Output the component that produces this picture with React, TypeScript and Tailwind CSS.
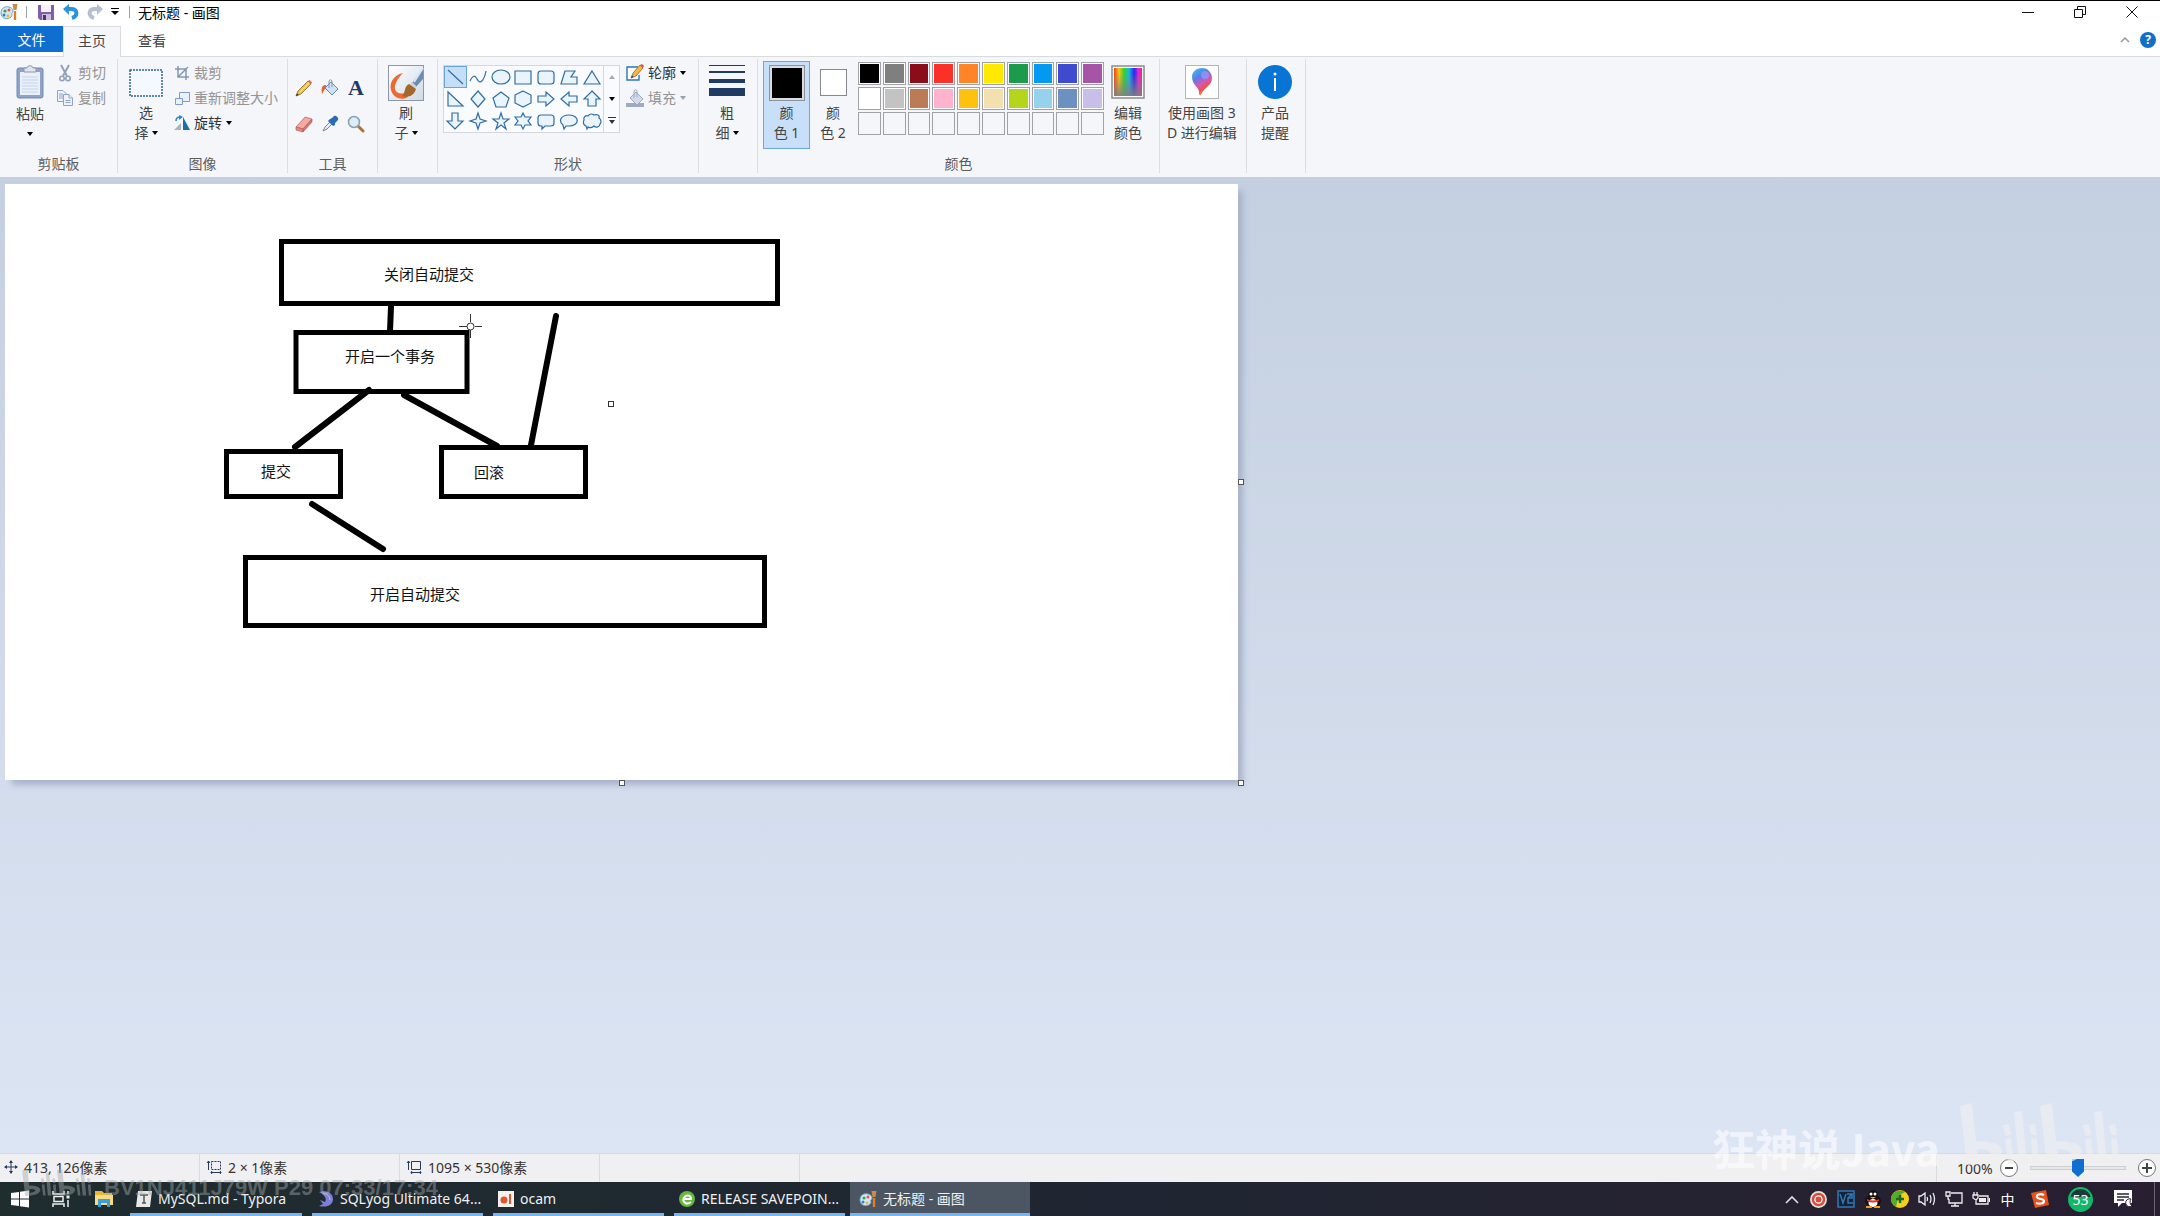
import type { ReactNode } from "react";

interface GroupProps {
  label?: string;
  className: string;
  children: ReactNode;
}

interface TaskItem {
  title: string;
  icon: ReactNode;
  className: string;
}

const shapes = [
  "M3 3 L18 17",
  "M2 14 C5 8 7 8 9 12 C12 18 16 14 18 4",
  "M1 10 a9 7 0 1 0 18 0 a9 7 0 1 0 -18 0",
  "M2 4 H18 V17 H2 Z",
  "M5 4 H15 Q18 4 18 7 V14 Q18 17 15 17 H5 Q2 17 2 14 V7 Q2 4 5 4 Z",
  "M6 4 H16 L12 10 H18 V17 H2 Z",
  "M10 4 L18 17 H2 Z",
  "M3 3 V17 H18 Z",
  "M10 2 L17 10 L10 18 L3 10 Z",
  "M10 3 L18 9 L15 18 H5 L2 9 Z",
  "M10 2 L18 6 V14 L10 18 L2 14 V6 Z",
  "M2 7 H10 V3 L18 10 L10 17 V13 H2 Z",
  "M18 7 H10 V3 L2 10 L10 17 V13 H18 Z",
  "M10 2 L18 10 H14 V17 H6 V10 H2 Z",
  "M7 2 H13 V10 H18 L10 18 L2 10 H7 Z",
  "M10 2 L12 8 L18 10 L12 12 L10 18 L8 12 L2 10 L8 8 Z",
  "M10 2 L12 8 H18 L13 12 L15 18 L10 14 L5 18 L7 12 L2 8 H8 Z",
  "M10 2 L12 6 H18 L15 10 L18 14 H12 L10 18 L8 14 H2 L5 10 L2 6 H8 Z",
  "M5 4 H15 Q18 4 18 7 V12 Q18 15 15 15 H9 L6 18 V15 H5 Q2 15 2 12 V7 Q2 4 5 4 Z",
  "M7 15 L5 18 L4 14 C-1 10 2 4 10 4 C21 4 21 15 10 15 Z",
  "M6 16 L5 18 L4 15 C1 14 1 11 2 9 C1 6 4 4 6 5 C8 2 11 3 12 4 C15 3 18 4 17 7 C20 9 19 12 18 13 C18 16 14 17 12 15 C10 17 7 17 6 16 Z",
];

const palette = [
  "bg-[#000000]", "bg-[#7f7f7f]", "bg-[#8b0d1a]", "bg-[#fb3029]", "bg-[#ff8427]",
  "bg-[#ffe900]", "bg-[#1c9c4b]", "bg-[#0398f1]", "bg-[#3f4bcf]", "bg-[#a654a6]",
  "bg-[#ffffff]", "bg-[#c3c3c3]", "bg-[#bb7b56]", "bg-[#ffb2cb]", "bg-[#ffc110]",
  "bg-[#f2e1ae]", "bg-[#b3d51c]", "bg-[#96d2ec]", "bg-[#6c90bf]", "bg-[#c8bfe9]",
  "", "", "", "", "", "", "", "", "", "",
];

const Caret = ({ muted = false }: { muted?: boolean }) => (
  <svg className={muted ? "h-1 w-[6px] text-gray-400" : "h-1 w-[6px] text-black"} viewBox="0 0 6 4" fill="currentColor">
    <path d="M0 0H6L3 4Z" />
  </svg>
);

const Group = ({ label, className, children }: GroupProps) => (
  <section className={`mt-[2px] mb-1 flex h-[114px] shrink-0 flex-col border-r border-[#dcdee3] ${className}`}>
    <div className="flex flex-1 items-start pt-[6px]">{children}</div>
    {label && <div className="h-5 text-center leading-[22px] text-[#5c5c5c]">{label}</div>}
  </section>
);

const PaintIcon = () => (
  <svg className="h-[18px] w-[18px] shrink-0" viewBox="0 0 18 18">
    <path d="M1 10 C1 5 5 3 9 4 C13 5 14 8 12 10 C11 11 13 12 11 14 C8 17 1 16 1 10Z" fill="#d3e8f4" stroke="#6fa3c0" />
    <circle cx="5" cy="8" r="1.6" fill="#43a047" />
    <circle cx="9" cy="7" r="1.5" fill="#e2574c" />
    <circle cx="4" cy="12" r="1.5" fill="#2f80d0" />
    <circle cx="8" cy="13" r="1.4" fill="#f0b429" />
    <path d="M15 8V17" stroke="#d9822b" strokeWidth="2.4" />
    <path d="M12.5 1 L17.5 1 L16.5 7 H13.5Z" fill="#c98b4b" />
  </svg>
);

const SaveIcon = () => (
  <svg className="h-4 w-4" viewBox="0 0 16 16">
    <path d="M0 1H16V16H2L0 14Z" fill="#7e5fa8" />
    <path d="M3 1H13V8H3Z" fill="#f4f1fa" />
    <path d="M4 10H13V16H4Z" fill="#c9bfdc" />
    <path d="M5 11H8V16H5Z" fill="#4b3474" />
  </svg>
);

const UndoIcon = () => (
  <svg className="h-4 w-4" viewBox="0 0 16 16">
    <path d="M4 5 H8 C15 5 15 12 9 14" fill="none" stroke="#2b93dc" strokeWidth="4" />
    <path d="M0 5 L6 0 V11Z" fill="#2b93dc" />
  </svg>
);

const RedoIcon = () => (
  <svg className="h-4 w-4" viewBox="0 0 16 16">
    <path d="M12 5 H8 C1 5 1 12 7 14" fill="none" stroke="#b4bfd3" strokeWidth="4" />
    <path d="M16 5 L10 0 V11Z" fill="#b4bfd3" />
  </svg>
);

const PasteIcon = () => (
  <svg className="h-[34px] w-7" viewBox="0 0 28 34">
    <rect x="1" y="3" width="26" height="30" rx="2" fill="#8ea3c8" stroke="#7489b1" />
    <path d="M4 7H24V30H4Z" fill="#e9f0fa" />
    <path d="M6 12H22M6 15H22M6 18H22M6 21H22M6 24H22M6 27H22" stroke="#c5d3e8" />
    <path d="M8 3H11C11 0 17 0 17 3H20V7H8Z" fill="#dfe5ef" stroke="#8b98ad" />
  </svg>
);

const CutIcon = () => (
  <svg className="h-[18px] w-[18px]" viewBox="0 0 18 18" fill="none" stroke="#92a0b8" strokeWidth="1.6">
    <path d="M5 1L11 12M13 1L7 12" strokeWidth="2" />
    <circle cx="6" cy="14.5" r="2.2" />
    <circle cx="12" cy="14.5" r="2.2" />
  </svg>
);

const CopyIcon = () => (
  <svg className="h-[18px] w-[18px]" viewBox="0 0 18 18" fill="#eef3fb" stroke="#8fa5c8">
    <path d="M1.5 1.5H7L10.5 5V12.5H1.5Z" />
    <path d="M3 5H7M3 7H7M3 9H7" />
    <path d="M7.5 5.5H13L16.5 9V16.5H7.5Z" />
    <path d="M13 5.5V9H16.5M9.5 11.5H14.5M9.5 13.5H14.5" />
  </svg>
);

const CropIcon = () => (
  <svg className="h-4 w-4" viewBox="0 0 16 16" fill="none" stroke="#8496b5" strokeWidth="1.5">
    <path d="M4 1V12H15M1 4H12V15M4 12L14 2" />
  </svg>
);

const ResizeIcon = () => (
  <svg className="h-4 w-4" viewBox="0 0 16 16" fill="#eaf1fa" stroke="#7f9cc4">
    <path d="M5.5 2.5H15.5V11.5H5.5Z" />
    <path d="M1.5 8.5H8.5V14.5H1.5Z" />
  </svg>
);

const RotateIcon = () => (
  <svg className="h-4 w-4" viewBox="0 0 16 16">
    <path d="M9 2V15H16Z" fill="#1c6ea8" />
    <path d="M7 8V15H0Z" fill="#a9b3c0" />
    <path d="M2 6C2 3 4 2 6 2" stroke="#2f86cf" strokeWidth="1.6" fill="none" />
    <path d="M5 0L9 2L5 5Z" fill="#2f86cf" />
  </svg>
);

const PencilIcon = () => (
  <svg className="h-[18px] w-[18px]" viewBox="0 0 18 18">
    <path d="M1 17L3 12L13 2L16 5L6 15Z" fill="#f0c052" stroke="#8a6a2c" strokeWidth=".8" />
    <path d="M13 2L14.5 .8L17.2 3.6L16 5Z" fill="#d9706a" />
    <path d="M1 17L2 14.3L3.8 16Z" fill="#333" />
    <path d="M5 13L14 4" stroke="#fbe49c" />
  </svg>
);

const BucketIcon = ({ muted = false }: { muted?: boolean }) => (
  <svg className="h-[18px] w-[18px]" viewBox="0 0 18 18">
    {muted ? <path d="M0 14H18V18H0Z" fill="#9caac2" /> : <path d="M5 6C1 6 0 9 1 15C3 12 3 10 6 9Z" fill="#e2603a" />}
    <path d="M10 3L17 10L11 16L4 9Z" fill={muted ? "#d4dbe8" : "#cfe2f4"} stroke={muted ? "#9aa9c2" : "#5f8db8"} />
    <path d="M8 9V3C8 0 11 0 11 3V8" fill="none" stroke={muted ? "#9aa9c2" : "#8a9097"} />
  </svg>
);

const EraserIcon = () => (
  <svg className="h-[18px] w-[18px]" viewBox="0 0 18 18" strokeWidth=".7" stroke="#b55f5a">
    <path d="M1 12L10 2L17 4L8 14Z" fill="#f4a9a3" />
    <path d="M1 12L8 14V17L1 15Z" fill="#e88780" />
    <path d="M8 14L17 4V7L8 17Z" fill="#d9736d" />
  </svg>
);

const PickerIcon = () => (
  <svg className="h-[18px] w-[18px]" viewBox="0 0 18 18">
    <path d="M2 16L4 12L10 6L12 8L6 14Z" fill="#e5eef6" stroke="#71879d" />
    <path d="M9 4L11 3L13 1C15 0 18 3 17 5L14 8V10L12 11L7 6Z" fill="#2a6bb5" />
  </svg>
);

const MagnifierIcon = () => (
  <svg className="h-[18px] w-[18px]" viewBox="0 0 18 18">
    <path d="M11 11L16 16" stroke="#b07437" strokeWidth="3" strokeLinecap="round" />
    <circle cx="7" cy="7" r="5.5" fill="#dcedfa" stroke="#8b9db1" strokeWidth="1.5" />
  </svg>
);

const BrushIcon = () => (
  <svg className="h-9 w-9" viewBox="0 0 36 36">
    <defs>
      <linearGradient id="brush-bg" x2="1" y2="1">
        <stop stopColor="#ffffff" />
        <stop offset="1" stopColor="#cfd9e6" />
      </linearGradient>
    </defs>
    <rect x=".5" y=".5" width="35" height="35" fill="url(#brush-bg)" stroke="#8c97a8" />
    <path d="M15 8C5 10 1 19 3 25C5 33 14 36 20 32L17 28C10 30 6 26 7 21C8 16 11 12 15 8Z" fill="#ec6a31" />
    <path d="M35 3L24 18L28 22L35 14Z" fill="#6d8db1" />
    <path d="M35 3L26 17" stroke="#dbe5f0" strokeWidth="2" />
    <path d="M24 17L29 22L26 25L21 20Z" fill="#cfd5db" />
    <path d="M21 19C16 21 18 27 14 31C20 33 26 31 28 24Z" fill="#a4662d" />
  </svg>
);

const RainbowIcon = () => (
  <svg className="h-[34px] w-[34px]" viewBox="0 0 34 34">
    <defs>
      <linearGradient id="hue">
        <stop stopColor="#f0401c" />
        <stop offset=".18" stopColor="#f4c516" />
        <stop offset=".36" stopColor="#2fd42c" />
        <stop offset=".54" stopColor="#19b4e8" />
        <stop offset=".72" stopColor="#2828e8" />
        <stop offset=".88" stopColor="#e828d8" />
        <stop offset="1" stopColor="#f02860" />
      </linearGradient>
      <linearGradient id="fade" x2="0" y2="1">
        <stop offset=".2" stopColor="#808080" stopOpacity="0" />
        <stop offset="1" stopColor="#808080" stopOpacity=".9" />
      </linearGradient>
    </defs>
    <rect x="1" y="1" width="32" height="32" fill="#fff" stroke="#8b8b8b" strokeWidth="1.5" />
    <rect x="3" y="3" width="28" height="28" fill="url(#hue)" />
    <rect x="3" y="3" width="28" height="28" fill="url(#fade)" />
  </svg>
);

const Paint3DIcon = () => (
  <svg className="h-[34px] w-[34px]" viewBox="0 0 34 34">
    <defs>
      <linearGradient id="drop" x1=".1" x2=".6" y2="1">
        <stop stopColor="#35c3f3" />
        <stop offset=".35" stopColor="#5a7be8" />
        <stop offset=".6" stopColor="#d457b5" />
        <stop offset=".8" stopColor="#f0504e" />
        <stop offset="1" stopColor="#f8b133" />
      </linearGradient>
    </defs>
    <rect x=".5" y=".5" width="33" height="33" fill="#fff" stroke="#b5b5b5" />
    <path d="M17 3C23 3 27 8 27 13C27 21 19 22 16 30C15 31 14 30 14 28C15 23 7 20 7 12C7 7 11 3 17 3Z" fill="url(#drop)" />
    <circle cx="20" cy="10" r="4" fill="#8fa0f4" opacity=".7" />
  </svg>
);

const OutlineIcon = () => (
  <svg className="h-[18px] w-[18px]" viewBox="0 0 18 18">
    <path d="M12 3H1V16H13V11" fill="#fff" stroke="#2e75b5" strokeWidth="1.4" />
    <path d="M5 14L7 9L14 1L17 4L10 12Z" fill="#f0b84a" stroke="#94662b" strokeWidth=".8" />
    <path d="M14 1L17 4L18 2L16 0Z" fill="#d3574f" />
    <path d="M5 14L6 11.5L7.5 13Z" fill="#333" />
  </svg>
);

// Ribbon button with the two line caption under its picture
const TallButton = ({ icon, lines, caret = false, className }: { icon: ReactNode; lines: string[]; caret?: boolean; className: string }) => (
  <button className={`flex flex-col items-center ${className}`}>
    <span className="flex h-[38px] items-start justify-center">{icon}</span>
    <span className="leading-5">{lines[0]}</span>
    <span className="flex items-center gap-[3px] leading-5 whitespace-nowrap">
      {lines[1]}
      {caret && <Caret />}
    </span>
  </button>
);

const SmallButton = ({ icon, text, disabled = false, caret = false }: { icon: ReactNode; text: string; disabled?: boolean; caret?: boolean }) => (
  <button disabled={disabled} className="flex h-[25px] items-center gap-1 whitespace-nowrap text-[#333] disabled:text-[#949494]">
    {icon}
    {text}
    {caret && <Caret muted={disabled} />}
  </button>
);

const TitleBar = () => (
  <header className="flex h-[26px] items-start border-t border-black bg-white">
    <div className="flex h-[22px] items-center">
      <PaintIcon />
      <span className="mr-[11px] ml-2 h-3 w-px bg-gray-400" />
      <button aria-label="保存" className="mr-[9px]"><SaveIcon /></button>
      <button aria-label="撤消" className="mr-2"><UndoIcon /></button>
      <button aria-label="重做" className="mr-2"><RedoIcon /></button>
      <button aria-label="自定义快速访问工具栏">
        <svg className="h-2 w-2" viewBox="0 0 8 8"><path d="M0 0H8V1H0ZM0 3H8L4 7Z" /></svg>
      </button>
      <span className="mr-2 ml-[10px] h-3 w-px bg-gray-400" />
      <h1 className="text-black">无标题 - 画图</h1>
    </div>
    <div className="ml-auto flex h-[22px] pr-[2px]">
      <button aria-label="最小化" className="flex w-[52px] items-center justify-center">
        <svg className="h-3 w-3" viewBox="0 0 12 12" stroke="#111"><path d="M0 6.500H12" /></svg>
      </button>
      <button aria-label="还原" className="flex w-[52px] items-center justify-center">
        <svg className="h-3 w-3" viewBox="0 0 12 12" stroke="#111" fill="none"><path d="M.5 3.500H8.500V11.500H.5ZM3.500 3.500V.5H11.500V8.500H8.500" /></svg>
      </button>
      <button aria-label="关闭" className="flex w-[52px] items-center justify-center">
        <svg className="h-3 w-3" viewBox="0 0 12 12" stroke="#111"><path d="M.5.5L11.500 11.500M11.500.5L.5 11.500" /></svg>
      </button>
    </div>
  </header>
);

const TabRow = () => (
  <nav className="flex h-[31px] items-start border-b border-[#dadbdf] bg-white">
    <button className="h-[26px] w-[63px] bg-[#0f6fd0] text-white">文件</button>
    <button className="-mb-px h-[31px] w-[58px] border-x border-t border-[#dadbdf] bg-[#f5f6fa] pb-[3px] text-[#444]">主页</button>
    <button className="h-[28px] w-[62px] text-[#444]">查看</button>
    <div className="ml-auto flex h-[28px] items-center gap-[10px] pr-1">
      <button aria-label="最小化功能区">
        <svg className="h-[6px] w-[10px]" viewBox="0 0 10 6" fill="none" stroke="#999" strokeWidth="1.5"><path d="M1 5L5 1L9 5" /></svg>
      </button>
      <button aria-label="帮助" className="h-4 w-4 rounded-full bg-[#1070c8] text-xs leading-4 font-bold text-white">?</button>
    </div>
  </nav>
);

const Ribbon = () => (
  <div className="flex h-[120px] overflow-hidden bg-[#f5f6fa] text-[#444]">
    <Group label="剪贴板" className="w-[118px]">
      <button className="ml-4 flex flex-col items-center">
        <PasteIcon />
        <span className="mt-1 leading-[22px]">粘贴</span>
        <span className="mt-[7px]"><Caret /></span>
      </button>
      <div className="-mt-[5px] ml-3">
        <SmallButton disabled icon={<CutIcon />} text="剪切" />
        <SmallButton disabled icon={<CopyIcon />} text="复制" />
      </div>
    </Group>

    <Group label="图像" className="w-[170px]">
      <TallButton
        className="ml-[10px] w-[36px]"
        lines={["选", "择"]}
        caret
        icon={
          <svg className="mt-1 h-7 w-[34px]" viewBox="0 0 34 28" fill="#f4f9ff" stroke="#2c6397" strokeWidth="1.500" strokeDasharray="2 1">
            <path d="M1 1H33V27H1Z" />
          </svg>
        }
      />
      <div className="-mt-[5px] ml-[10px]">
        <SmallButton disabled icon={<CropIcon />} text="裁剪" />
        <SmallButton disabled icon={<ResizeIcon />} text="重新调整大小" />
        <SmallButton caret icon={<RotateIcon />} text="旋转" />
      </div>
    </Group>

    <Group label="工具" className="w-[90px]">
      <div className="ml-[7px] mt-[14px] grid grid-cols-3 gap-x-2 gap-y-[18px]">
        <button aria-label="铅笔"><PencilIcon /></button>
        <button aria-label="用颜色填充"><BucketIcon /></button>
        <button aria-label="文本" className="h-[18px] w-[18px] font-[Liberation_Serif,serif] text-[22px] leading-[18px] font-bold text-[#1f3a63]">A</button>
        <button aria-label="橡皮擦"><EraserIcon /></button>
        <button aria-label="颜色选取器"><PickerIcon /></button>
        <button aria-label="放大镜"><MagnifierIcon /></button>
      </div>
    </Group>

    <Group className="w-[60px]">
      <TallButton className="ml-[10px]" lines={["刷", "子"]} caret icon={<BrushIcon />} />
    </Group>

    <Group label="形状" className="w-[261px]">
      <div className="ml-[5px] flex h-[68px] border border-[#d4d7dd] bg-[#fafbfe]">
        <div className="grid w-[159px] grid-cols-7 content-start">
          {shapes.map((d, index) => (
            <button
              key={index}
              aria-label={`形状 ${index + 1}`}
              className={`flex h-[22px] items-center justify-center border ${index === 0 ? "border-[#6ba4dc] bg-[#c6dff8]" : "border-transparent"}`}
            >
              <svg className="h-5 w-5" viewBox="0 0 20 20" fill={index < 2 ? "none" : "#eaf4fd"} stroke="#2f6da3" strokeWidth="1.2">
                <path d={d} />
              </svg>
            </button>
          ))}
        </div>
        <div className="flex w-4 flex-col border-l border-[#d4d7dd]">
          <button aria-label="上一行" className="flex flex-1 items-center justify-center">
            <svg className="h-1 w-[6px]" viewBox="0 0 6 4" fill="#aaa"><path d="M0 4H6L3 0Z" /></svg>
          </button>
          <button aria-label="下一行" className="flex flex-1 items-center justify-center"><Caret /></button>
          <button aria-label="更多形状" className="flex flex-1 items-center justify-center">
            <svg className="h-2 w-2" viewBox="0 0 8 8" fill="#333"><path d="M0 0H8V1H0ZM1 3H7L4 7Z" /></svg>
          </button>
        </div>
      </div>
      <div className="-mt-[5px] ml-[6px]">
        <SmallButton caret icon={<OutlineIcon />} text="轮廓" />
        <SmallButton caret disabled icon={<BucketIcon muted />} text="填充" />
      </div>
    </Group>

    <Group className="w-[59px]">
      <TallButton
        className="ml-[10px]"
        lines={["粗", "细"]}
        caret
        icon={
          <svg className="h-8 w-9" viewBox="0 0 36 32" fill="#1f3a63">
            <path d="M0 0H36V1H0ZM0 6H36V8H0ZM0 14H36V18H0ZM0 23H36V31H0Z" />
          </svg>
        }
      />
    </Group>

    <Group label="颜色" className="w-[402px]">
      <button className="-mt-1 ml-[5px] flex h-[88px] w-[47px] flex-col items-center border border-[#6ea6df] bg-[#c7dff8] pt-[3px]">
        <span className="h-[36px] w-[36px] border border-[#8a929c] bg-[#d8dbe0] p-[2px]">
          <span className="block h-full bg-black" />
        </span>
        <span className="mt-[2px] leading-5">颜</span>
        <span className="leading-5">色 1</span>
      </button>
      <TallButton
        className="ml-2 w-[30px]"
        lines={["颜", "色 2"]}
        icon={<span className="mt-1 h-[27px] w-[27px] border border-[#85888f] bg-white" />}
      />
      <div className="-mt-[3px] ml-[10px] grid w-[246px] grid-cols-10 gap-[2px]">
        {palette.map((color, index) => (
          <button
            key={index}
            aria-label={`调色板 ${index + 1}`}
            className={`h-[23px] border border-[#a0a2a8] p-px ${color ? "bg-white" : "bg-[#f5f6fa]"}`}
          >
            <span className={`block h-full ${color}`} />
          </button>
        ))}
      </div>
      <TallButton className="ml-[7px]" lines={["编辑", "颜色"]} icon={<RainbowIcon />} />
    </Group>

    <Group className="w-[87px]">
      <TallButton className="ml-[7px] whitespace-nowrap" lines={["使用画图 3", "D 进行编辑"]} icon={<Paint3DIcon />} />
    </Group>

    <Group className="w-[59px]">
      <TallButton
        className="ml-[11px]"
        lines={["产品", "提醒"]}
        icon={
          <svg className="h-[34px] w-[34px]" viewBox="0 0 34 34">
            <circle cx="17" cy="17" r="17" fill="#0874d4" />
            <path d="M17 13V26" stroke="#fff" strokeWidth="2" />
            <circle cx="17" cy="9" r="1.500" fill="#fff" />
          </svg>
        }
      />
    </Group>
  </div>
);

const Drawing = () => (
  <svg className="block h-[596px] w-[1233px]" viewBox="5 184 1233 596">
    <g fill="none" stroke="#000" strokeWidth="5">
      <rect x="281.500" y="241.500" width="496" height="62" />
      <rect x="296" y="332.500" width="171" height="59" />
      <rect x="226.500" y="451.500" width="114" height="45" />
      <rect x="441.500" y="447.500" width="144" height="49" />
      <rect x="245.500" y="557.500" width="519" height="68" />
    </g>
    <g stroke="#000" strokeWidth="6" strokeLinecap="round">
      <path d="M391 307L390 331M369 390L295 447M404 395L497 446M556 316L531 445M312 504L383 549" />
    </g>
    <g className="font-['Noto_Sans_CJK_SC',sans-serif] text-[15px]" fill="#111">
      <text x="384" y="280">关闭自动提交</text>
      <text x="345" y="362">开启一个事务</text>
      <text x="261" y="477">提交</text>
      <text x="474" y="478">回滚</text>
      <text x="370" y="600">开启自动提交</text>
    </g>
    <g fill="#fff" stroke="#333">
      <path d="M459 326.500H467M475 326.500H482M470.500 314V322M470.500 330V338" />
      <circle cx="470.500" cy="326.500" r="3.500" />
      <rect x="608.500" y="401.500" width="5" height="5" />
    </g>
  </svg>
);

const Workspace = () => (
  <main className="flex-1 overflow-hidden bg-linear-to-b from-[#c4cfdf] to-[#dce5f4] pt-[7px] pl-[5px]">
    <div className="relative w-[1233px] bg-white shadow-[6px_6px_6px_-1px_#a9b3cb]">
      <Drawing />
      <span className="absolute top-1/2 -right-[6px] h-[6px] w-[6px] -translate-y-1/2 border border-[#555] bg-white" />
      <span className="absolute -right-[6px] -bottom-[6px] h-[6px] w-[6px] border border-[#555] bg-white" />
      <span className="absolute -bottom-[6px] left-1/2 h-[6px] w-[6px] -translate-x-1/2 border border-[#555] bg-white" />
    </div>
  </main>
);

const StatusBar = () => (
  <footer className="flex h-[29px] items-center border-t border-[#d9dade] bg-[#f0f0f2] text-[#333]">
    <div className="flex h-full w-[200px] items-center gap-[6px] border-r border-[#d9dade] pb-[2px] pl-1">
      <svg className="h-[14px] w-[14px]" viewBox="0 0 14 14" stroke="#243a5e" fill="#243a5e">
        <path d="M7 1V13M1 7H13" />
        <path d="M7 0L9 3H5ZM7 14L5 11H9ZM0 7L3 5V9ZM14 7L11 9V5Z" stroke="none" />
      </svg>
      <span>413, 126像素</span>
    </div>
    <div className="flex h-full w-[200px] items-center gap-[6px] border-r border-[#d9dade] pb-[2px] pl-[6px]">
      <svg className="h-4 w-4" viewBox="0 0 16 16" stroke="#243a5e" fill="none">
        <path d="M5.500 2.500H14.500V10.500H5.500Z" strokeDasharray="2 1" />
        <path d="M2.500 2V11M1 4L2.500 2L4 4M5 13.500H15M6 12L5 13.500L6 15M14 12L15 13.500L14 15" />
      </svg>
      <span>2 × 1像素</span>
    </div>
    <div className="flex h-full w-[200px] items-center gap-[6px] border-r border-[#d9dade] pb-[2px] pl-[6px]">
      <svg className="h-4 w-4" viewBox="0 0 16 16" stroke="#243a5e" fill="none">
        <path d="M5.500 2.500H14.500V10.500H5.500Z" />
        <path d="M2.500 2V11M1 4L2.500 2L4 4M5 13.500H15M6 12L5 13.500L6 15M14 12L15 13.500L14 15" />
      </svg>
      <span>1095 × 530像素</span>
    </div>
    <div className="h-full w-[200px] border-r border-[#d9dade]" />
    <div className="ml-auto flex h-full items-center border-l border-[#d9dade] pr-1 pl-5">
      <label htmlFor="zoom" className="w-[43px]">100%</label>
      <button aria-label="缩小" className="flex h-[18px] w-[18px] items-center justify-center rounded-full border border-[#777] bg-white">
        <svg className="h-2 w-2" viewBox="0 0 8 8" fill="#444"><path d="M0 3H8V5H0Z" /></svg>
      </button>
      <input
        id="zoom"
        type="range"
        defaultValue={50}
        className="mx-3 h-5 w-[96px] appearance-none bg-transparent [&::-webkit-slider-runnable-track]:h-[4px] [&::-webkit-slider-runnable-track]:border [&::-webkit-slider-runnable-track]:border-[#cfcfd2] [&::-webkit-slider-runnable-track]:bg-[#e7e7e9] [&::-webkit-slider-thumb]:-mt-2 [&::-webkit-slider-thumb]:h-[18px] [&::-webkit-slider-thumb]:w-3 [&::-webkit-slider-thumb]:appearance-none [&::-webkit-slider-thumb]:bg-[#0f6fd0] [&::-webkit-slider-thumb]:[clip-path:polygon(0_0,100%_0,100%_70%,50%_100%,0_70%)]"
      />
      <button aria-label="放大" className="flex h-[18px] w-[18px] items-center justify-center rounded-full border border-[#777] bg-white">
        <svg className="h-[10px] w-[10px]" viewBox="0 0 10 10" fill="#444"><path d="M4 0H6V4H10V6H6V10H4V6H0V4H4Z" /></svg>
      </button>
    </div>
  </footer>
);

const tasks: TaskItem[] = [
  {
    title: "MySQL.md - Typora",
    className: "mr-[10px] w-[172px] pl-[6px]",
    icon: (
      <svg className="h-4 w-4 shrink-0" viewBox="0 0 16 16">
        <path d="M2 0H16L14 16H0Z" fill="#e9e9e9" />
        <path d="M4 4H12M8 4V12M6 12H10" stroke="#555" strokeWidth="1.500" />
      </svg>
    ),
  },
  {
    title: "SQLyog Ultimate 64...",
    className: "mr-[10px] w-[171px] pl-[6px]",
    icon: (
      <svg className="h-4 w-4 shrink-0" viewBox="0 0 16 16">
        <path d="M1 1C7 -1 15 1 15 8C15 14 9 17 1 15L5 13L2 9L7 11C9 8 7 4 1 1Z" fill="#7d7fd6" />
        <path d="M5 2C10 3 12 6 12 9" stroke="#c0c2f5" fill="none" />
      </svg>
    ),
  },
  {
    title: "ocam",
    className: "mr-[10px] w-[171px] pl-[5px]",
    icon: (
      <svg className="h-4 w-4 shrink-0" viewBox="0 0 16 16">
        <rect width="16" height="16" fill="#f4f1ee" />
        <circle cx="6" cy="9" r="3.500" fill="#e0562f" />
        <path d="M12 3V13" stroke="#e0562f" strokeWidth="2" />
      </svg>
    ),
  },
  {
    title: "RELEASE SAVEPOIN...",
    className: "mr-[5px] w-[171px] pl-[5px]",
    icon: (
      <svg className="h-4 w-4 shrink-0" viewBox="0 0 16 16">
        <circle cx="8" cy="8" r="8" fill="#67b93e" />
        <path d="M12 11C7 15 3 10 5 7C7 3 12 4 12 8H4" fill="none" stroke="#fff" strokeWidth="2" />
      </svg>
    ),
  },
  {
    title: "无标题 - 画图",
    className: "w-[180px] bg-[#4c5662] pl-[9px]",
    icon: <PaintIcon />,
  },
];

const Tray = () => (
  <div className="ml-auto flex items-center pr-[5px] text-white">
    <button aria-label="显示隐藏的图标" className="flex w-[27px] justify-center">
      <svg className="h-[9px] w-[14px]" viewBox="0 0 14 9" fill="none" stroke="#ddd" strokeWidth="1.600"><path d="M1 8L7 2L13 8" /></svg>
    </button>
    <span className="flex w-[27px] justify-center">
      <svg className="h-[17px] w-[17px]" viewBox="0 0 17 17">
        <circle cx="8.500" cy="8.500" r="8.500" fill="#e9e1df" />
        <circle cx="8.500" cy="8.500" r="5.500" fill="#fff" stroke="#d84a3c" strokeWidth="2.500" />
        <circle cx="8.500" cy="8.500" r="3" fill="#d84a3c" />
      </svg>
    </span>
    <span className="flex w-[27px] justify-center">
      <svg className="h-[18px] w-[18px]" viewBox="0 0 18 18" fill="none" stroke="#2f78b8" strokeWidth="1.500">
        <rect x="1" y="1" width="16" height="16" fill="#142234" />
        <path d="M3 4L6 13L9 4M10 4H15V8H11V13H16M11 8L15 4" />
      </svg>
    </span>
    <span className="flex w-[27px] justify-center">
      <svg className="h-[18px] w-[18px]" viewBox="0 0 18 18">
        <ellipse cx="9" cy="11" rx="8" ry="6" fill="#111" />
        <ellipse cx="9" cy="6" rx="5" ry="6" fill="#111" />
        <ellipse cx="9" cy="13" rx="4.500" ry="4" fill="#fff" />
        <circle cx="7" cy="4" r="1.500" fill="#fff" />
        <circle cx="11" cy="4" r="1.500" fill="#fff" />
        <path d="M6 7H12L9 9Z" fill="#f3a11d" />
        <path d="M3 9Q9 12 15 9V11Q9 14 3 11Z" fill="#df2f25" />
        <path d="M2 16H8V18H2ZM10 16H16V18H10Z" fill="#f3a11d" />
      </svg>
    </span>
    <span className="flex w-[27px] justify-center">
      <svg className="h-[18px] w-[18px]" viewBox="0 0 18 18">
        <circle cx="9" cy="9" r="9" fill="#f4cf1c" />
        <path d="M0 9A9 9 0 0 1 14 2Q7 4 5 17A9 9 0 0 1 0 9Z" fill="#59a92c" />
        <path d="M9 5V13M5 9H13" stroke="#176b23" strokeWidth="2.500" />
      </svg>
    </span>
    <button aria-label="音量" className="flex w-[27px] justify-center">
      <svg className="h-4 w-[18px]" viewBox="0 0 18 16" fill="none" stroke="#eee" strokeWidth="1.300">
        <path d="M1 5H3L7 2V14L3 11H1ZM9 6Q10 8 9 10M12 4Q14 8 12 12M15 2Q18 8 15 14" />
      </svg>
    </button>
    <button aria-label="网络" className="flex w-[27px] justify-center">
      <svg className="h-4 w-[18px]" viewBox="0 0 18 16" fill="none" stroke="#eee" strokeWidth="1.300">
        <path d="M6 2H17V12H4V8M10 12V15M6 15H14M1 1H5V5H1ZM3 5V8H4" />
      </svg>
    </button>
    <button aria-label="电池" className="flex w-[27px] justify-center">
      <svg className="h-[14px] w-[18px]" viewBox="0 0 18 14" fill="none" stroke="#eee" strokeWidth="1.300">
        <path d="M7 4H16V12H4V8M17.500 6V10M2 0V3M5 0V3M1 3H6V6L4 8L1 6Z" />
        <path d="M7 6H14V10H7Z" fill="#eee" stroke="none" />
      </svg>
    </button>
    <button className="w-[27px]">中</button>
    <span className="mr-[9px] ml-2 flex w-[21px] justify-center">
      <svg className="h-[18px] w-[18px]" viewBox="0 0 18 18">
        <path d="M0 3L15 0L18 15L4 18Z" fill="#e8501d" />
        <path d="M13 5C9 3 5 5 6 7C7 10 13 8 13 11C13 14 8 14 5 13" fill="none" stroke="#fff" strokeWidth="2.200" />
      </svg>
    </span>
    <span className="mx-[9px] h-[25px] w-[25px] rounded-full border-2 border-[#12b76a] bg-linear-to-b from-[#1d3a38] from-40% to-[#12b76a] to-40% text-center leading-[21px]">
      53
    </span>
    <button aria-label="通知" className="ml-3">
      <svg className="h-[18px] w-5" viewBox="0 0 20 18">
        <path d="M0 0H18V13H8L4 17V13H0Z" fill="#fff" />
        <path d="M3 4H15M3 7H15M3 10H10" stroke="#2a2333" strokeWidth="1.300" />
        <path d="M17 9A4 4 0 1 0 18 16A5 5 0 0 1 17 9Z" fill="#fff" stroke="#2a2333" />
      </svg>
    </button>
    <span className="ml-[20px] h-[34px] w-px bg-[#6a6673]" />
  </div>
);

const Taskbar = () => (
  <div className="flex h-[34px] bg-linear-to-r from-[#1f2d2f] via-[#1f2632] to-[#281f31] text-[#f0f0f0]">
    <button aria-label="开始" className="flex w-[40px] items-center justify-center">
      <svg className="h-[18px] w-[18px]" viewBox="0 0 18 18" fill="#fff">
        <path d="M0 3L8 2V8.500H0ZM9 1.800L18 .5V8.500H9ZM0 9.500H8V16L0 15ZM9 9.500H18V17.500L9 16.200Z" />
      </svg>
    </button>
    <button aria-label="任务视图" className="flex w-[42px] items-center justify-center">
      <svg className="h-4 w-[18px]" viewBox="0 0 18 16" fill="none" stroke="#eee" strokeWidth="1.500">
        <path d="M1 0V3H12V0M1 16V13H12V16M2 5.500H11V10.500H2ZM16 0V3M16 9V16" />
        <path d="M14.500 4.500H17.500V7.500H14.500Z" fill="#eee" stroke="none" />
      </svg>
    </button>
    <button aria-label="文件资源管理器" className="mr-[4px] flex w-[44px] items-center justify-center">
      <svg className="h-4 w-[18px]" viewBox="0 0 18 16">
        <path d="M0 0H7L9 2H17V6H0Z" fill="#e8b63a" />
        <path d="M0 4H18V14H0Z" fill="#fbdb7c" />
        <path d="M3 16V8H15V16H12V12H6V16Z" fill="#3aa0dc" />
      </svg>
    </button>
    {tasks.map((task) => (
      <button
        key={task.title}
        className={`flex items-center gap-[6px] border-b-[3px] border-[#76b5ee] pt-[2px] whitespace-nowrap ${task.className}`}
      >
        {task.icon}
        <span>{task.title}</span>
      </button>
    ))}
    <Tray />
  </div>
);

const BiliLogo = ({ className }: { className: string }) => (
  <svg className={className} viewBox="0 0 160 62" fill="currentColor">
    <path fillRule="evenodd" d="M0 3L12 0L16 38Q42 38 42 49Q38 62 7 62ZM17 46L18 55Q28 54 31 49Q29 46 17 46Z" />
    <path d="M43 22L49 21L51 32L45 33ZM45 36L51 35L54 61H48ZM54 9L62 8L67 61H59ZM69 22L75 21L77 32H71ZM71 36L77 35L79 61H73Z" />
    <path fillRule="evenodd" d="M80 3L92 0L96 38Q122 38 122 49Q118 62 87 62ZM97 46L98 55Q108 54 111 49Q109 46 97 46Z" />
    <path d="M123 22L129 21L131 32L125 33ZM125 36L131 35L134 61H128ZM134 9L142 8L147 61H139ZM149 22L155 21L157 32H151ZM151 36L157 35L159 61H153Z" />
  </svg>
);

const Watermarks = () => (
  <div className="pointer-events-none">
    <div className="absolute right-[220px] bottom-[42px] font-['Noto_Sans_CJK_SC',sans-serif] text-[43px] leading-[54px] font-bold whitespace-nowrap text-white/60">狂神说Java</div>
    <BiliLogo className="absolute right-[40px] bottom-[51px] h-[62px] w-[160px] text-[#eeeef0]/70" />
    <div className="absolute bottom-[16px] left-[22px] flex items-end gap-3 text-[#a5a9ab]/45">
      <BiliLogo className="mb-1 h-[27px] w-[70px]" />
      <span className="font-['Liberation_Sans',sans-serif] text-[22px] leading-6 font-bold whitespace-nowrap">BV1NJ411J79W P29 07:33/17:34</span>
    </div>
  </div>
);

const App = () => (
  <div className="relative flex h-screen flex-col overflow-hidden font-['Noto_Sans','Noto_Sans_CJK_SC',sans-serif] text-[14px]">
    <TitleBar />
    <TabRow />
    <Ribbon />
    <Workspace />
    <StatusBar />
    <Taskbar />
    <Watermarks />
  </div>
);

export default App;
